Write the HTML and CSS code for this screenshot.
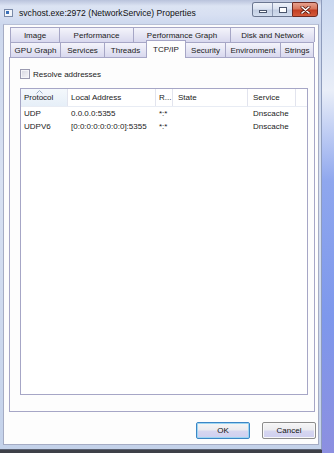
FILE: index.html
```html
<!DOCTYPE html>
<html lang="en">
<head>
    <meta charset="UTF-8">
    <title>svchost.exe:2972 (NetworkService) Properties</title>
    <link rel="stylesheet" href="styles.css">
</head>
<body>
    <div class="window">
        <div class="titlebar">
            <span class="app-icon"><span></span></span>
            <span class="title">svchost.exe:2972 (NetworkService) Properties</span>
            <div class="caption">
                <div class="caption-group">
                    <span class="cap cap-min"><i></i></span>
                    <span class="cap cap-max"><i></i></span>
                </div>
                <span class="cap cap-close">
                    <svg width="11" height="8" viewBox="0 0 11 8">
                        <path d="M2 1 L9 7 M9 1 L2 7" stroke="#5a1a10" stroke-width="3" stroke-linecap="round"/>
                        <path d="M2 1 L9 7 M9 1 L2 7" stroke="#fff" stroke-width="1.6" stroke-linecap="round"/>
                    </svg>
                </span>
            </div>
        </div>
        <div class="client">
            <div class="tabs">
                <div class="tab-row">
                    <span class="tab" style="width: 49px">Image</span>
                    <span class="tab" style="width: 74px">Performance</span>
                    <span class="tab" style="width: 97px">Performance Graph</span>
                    <span class="tab last" style="width: 85px">Disk and Network</span>
                </div>
                <div class="tab-row">
                    <span class="tab" style="width: 50px">GPU Graph</span>
                    <span class="tab" style="width: 44px">Services</span>
                    <span class="tab" style="width: 42px">Threads</span>
                    <span class="tab active" style="width: 40px">TCP/IP</span>
                    <span class="tab" style="width: 40px">Security</span>
                    <span class="tab" style="width: 55px">Environment</span>
                    <span class="tab last" style="width: 34px">Strings</span>
                </div>
            </div>
            <div class="panel">
                <label class="check"><span class="box"></span>Resolve addresses</label>
                <div class="listview">
                    <div class="lv-row lv-head">
                        <span class="c-proto sorted">
                            <svg class="sort" width="7" height="4" viewBox="0 0 7 4"><path d="M0.5 3.5 L3.5 0.5 L6.5 3.5" fill="none" stroke="#9db0c8" stroke-width="1"/></svg>
                            Protocol
                        </span>
                        <span class="c-local">Local Address</span>
                        <span class="c-remote">R...</span>
                        <span class="c-state">State</span>
                        <span class="c-service">Service</span>
                        <span class="c-rest"></span>
                    </div>
                    <div class="lv-row">
                        <span class="c-proto">UDP</span>
                        <span class="c-local">0.0.0.0:5355</span>
                        <span class="c-remote">*:*</span>
                        <span class="c-state"></span>
                        <span class="c-service">Dnscache</span>
                    </div>
                    <div class="lv-row">
                        <span class="c-proto">UDPV6</span>
                        <span class="c-local">[0:0:0:0:0:0:0:0]:5355</span>
                        <span class="c-remote">*:*</span>
                        <span class="c-state"></span>
                        <span class="c-service">Dnscache</span>
                    </div>
                </div>
            </div>
            <div class="buttons">
                <span class="btn btn-default">OK</span>
                <span class="btn">Cancel</span>
            </div>
        </div>
    </div>
</body>
</html>
```

FILE: styles.css
```css
* {
    margin: 0;
    padding: 0;
    box-sizing: border-box;
}
body {
    width: 334px;
    height: 453px;
    overflow: hidden;
    font-family: "Liberation Sans", Arial, sans-serif;
    font-size: 8px;
    color: #1a1a1a;
    background: linear-gradient(to bottom, #c9d7ef 0%, #e9eef8 20%, #8fa7ee 40%, #7e98ec 70%, #8c8fe0 100%);
}
.window {
    width: 322px;
    height: 450px;
    display: flex;
    flex-direction: column;
    background: linear-gradient(to bottom, #cbd6ec 0%, #d8e1f2 40%, #c4d2ea 100%);
    border-right: 1px solid #8e9cbc;
    border-bottom: 1px solid #5a6070;
    box-shadow: 0 3px 0 #3e4048;
}
.titlebar {
    height: 24px;
    display: flex;
    align-items: center;
    padding-left: 4px;
    background: linear-gradient(to bottom, #b9c3dc 0%, #dce4f3 25%, #d8e0f2 60%, #cdd8ee 100%);
}
.app-icon {
    width: 9px;
    height: 8px;
    margin-top: 2px;
    border: 1px solid #7a8aa8;
    background: #f2f5fa;
    display: flex;
    padding: 1px;
}
.app-icon span {
    width: 3px;
    height: 3px;
    background: #3a6fb8;
}
.title {
    margin-left: 6px;
    margin-top: 2px;
    font-size: 8.6px;
    color: #111;
    flex: 1;
}
.caption {
    display: flex;
    align-self: flex-start;
    margin-top: 2px;
    margin-right: 3px;
}
.caption-group {
    display: flex;
    height: 15px;
    border: 1px solid #6a7690;
    border-right: none;
    border-radius: 3px 0 0 3px;
    overflow: hidden;
}
.cap {
    display: flex;
    align-items: center;
    justify-content: center;
    height: 15px;
    background: linear-gradient(to bottom, #eef2f9 0%, #dbe3f1 45%, #c3cfe3 55%, #d3ddee 100%);
}
.caption-group .cap {
    height: 13px;
}
.cap-min {
    width: 20px;
    border-right: 1px solid #8e9ab4;
}
.cap-min i {
    width: 8px;
    height: 3px;
    margin-top: 3px;
    background: #fff;
    border: 1px solid #4a556c;
}
.cap-max {
    width: 19px;
}
.cap-max i {
    width: 8px;
    height: 6px;
    border: 1px solid #4a556c;
    box-shadow: inset 0 0 0 1px #fff, inset 0 1px 0 2px #fff;
    background: #9aa6bc;
}
.cap-close {
    width: 26px;
    border: 1px solid #6e2a22;
    border-radius: 0 3px 3px 0;
    background: linear-gradient(to bottom, #e7a18e 0%, #d8765c 45%, #c33e22 55%, #d45a3a 100%);
}
.client {
    height: 421px;
    margin-left: 3px;
    margin-right: 2px;
    background: #fdfdfd;
    border: 1px solid #a5acc4;
    border-top-color: #b8c0d6;
    padding: 2px 0 0 5px;
    display: flex;
    flex-direction: column;
}
.tabs {
    padding-left: 1px;
    display: flex;
    flex-direction: column;
}
.tab-row {
    display: flex;
    height: 15px;
}
.tab {
    display: flex;
    align-items: center;
    justify-content: center;
    height: 15px;
    border-top: 1px solid #a6a6c6;
    border-left: 1px solid #a6a6c6;
    background: linear-gradient(to bottom, #f4f4fb 0%, #e6e6f4 50%, #d8d8ee 100%);
    white-space: nowrap;
    padding-top: 1px;
}
.tab.last {
    border-right: 1px solid #a6a6c6;
}
.tab.active {
    position: relative;
    z-index: 1;
    height: 18px;
    margin-top: -2px;
    margin-bottom: -1px;
    background: #fdfdfd;
    border-right: 1px solid #a6a6c6;
    margin-right: -1px;
    padding-bottom: 2px;
}
.panel {
    width: 306px;
    height: 355px;
    border: 1px solid #a6a6c6;
    background: #fdfdfd;
    padding: 10px 0 0 10px;
    display: flex;
    flex-direction: column;
}
.check {
    display: flex;
    align-items: center;
    height: 12px;
}
.box {
    width: 10px;
    height: 10px;
    border: 1px solid #9a9ab0;
    background: linear-gradient(135deg, #d6d6e0, #f6f6fa);
    box-shadow: inset 0 0 0 1px #f4f4f8;
    margin-right: 3px;
}
.listview {
    margin-top: 8px;
    width: 288px;
    height: 307px;
    border: 1px solid #a6a6c6;
    background: #fff;
}
.lv-row {
    display: flex;
    height: 13px;
    align-items: center;
    white-space: nowrap;
}
.lv-row span {
    overflow: hidden;
    padding-left: 3px;
}
.lv-head {
    height: 18px;
    border-bottom: 1px solid #e8ecf4;
}
.lv-head span {
    height: 100%;
    display: flex;
    align-items: center;
    border-right: 1px solid #e2e4ee;
    position: relative;
}
.lv-head .sorted {
    background: linear-gradient(to bottom, #f4f8fc, #e6eff8);
}
.sort {
    position: absolute;
    top: 1px;
    left: 15px;
}
.c-proto {
    width: 47px;
}
.c-local {
    width: 88px;
}
.c-remote {
    width: 17px;
}
.c-state {
    width: 75px;
    padding-left: 5px !important;
}
.c-service {
    width: 48px;
}
.lv-head .c-service {
    padding-left: 5px;
}
.lv-row .c-service {
    padding-left: 5px;
}
.lv-head .c-rest {
    flex: 1;
    border-right: none;
}
.buttons {
    display: flex;
    justify-content: flex-end;
    gap: 12px;
    margin-top: 10px;
    padding-right: 2px;
}
.btn {
    width: 54px;
    height: 17px;
    display: flex;
    align-items: center;
    justify-content: center;
    border: 1px solid #8c8c8c;
    border-radius: 2px;
    box-shadow: inset 0 0 0 1px #f8f8f8;
    background: linear-gradient(to bottom, #f6f6f6 0%, #ececf0 45%, #d6d6f0 55%, #cfcff0 100%);
    color: #111;
}
.btn-default {
    border-color: #3c86c6;
    box-shadow: inset 0 0 0 1px #9ed6f2;
}
```
